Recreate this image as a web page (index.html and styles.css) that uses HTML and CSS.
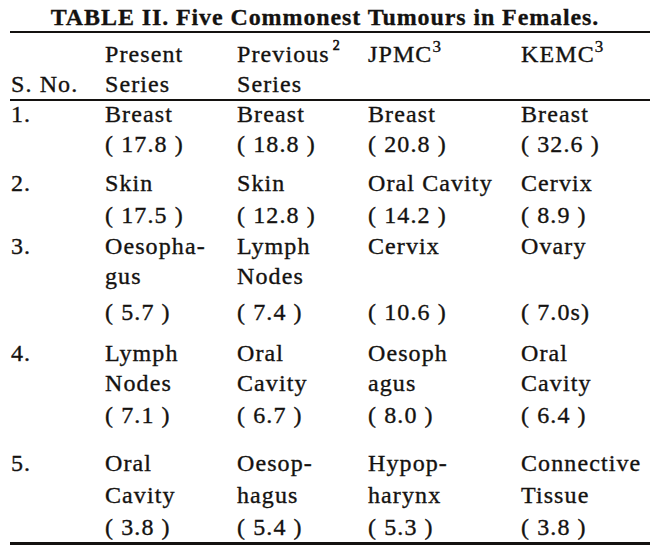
FILE: index.html
```html
<!DOCTYPE html>
<html>
<head>
<meta charset="utf-8">
<link rel="stylesheet" href="styles.css">
</head>
<body>
<div class="title">TABLE II. Five Commonest Tumours in Females.</div>
<div class="table">
  <div class="head grid">
    <div class="cell"><br>S. No.</div>
    <div class="cell">Present<br>Series</div>
    <div class="cell">Previous<sup class="sm">2</sup><br>Series</div>
    <div class="cell">JPMC<sup>3</sup></div>
    <div class="cell">KEMC<sup>3</sup></div>
  </div>

  <div class="row r1">
    <div class="names grid">
      <div class="cell">1.</div>
      <div class="cell">Breast</div>
      <div class="cell">Breast</div>
      <div class="cell">Breast</div>
      <div class="cell">Breast</div>
    </div>
    <div class="vals grid">
      <div class="cell"></div>
      <div class="cell">( 17.8 )</div>
      <div class="cell">( 18.8 )</div>
      <div class="cell">( 20.8 )</div>
      <div class="cell">( 32.6 )</div>
    </div>
  </div>

  <div class="row r2">
    <div class="names grid">
      <div class="cell">2.</div>
      <div class="cell">Skin</div>
      <div class="cell">Skin</div>
      <div class="cell">Oral Cavity</div>
      <div class="cell">Cervix</div>
    </div>
    <div class="vals grid">
      <div class="cell"></div>
      <div class="cell">( 17.5 )</div>
      <div class="cell">( 12.8 )</div>
      <div class="cell">( 14.2 )</div>
      <div class="cell">( 8.9 )</div>
    </div>
  </div>

  <div class="row r3">
    <div class="names grid">
      <div class="cell">3.</div>
      <div class="cell">Oesopha-<br>gus</div>
      <div class="cell">Lymph<br>Nodes</div>
      <div class="cell">Cervix</div>
      <div class="cell">Ovary</div>
    </div>
    <div class="vals grid">
      <div class="cell"></div>
      <div class="cell">( 5.7 )</div>
      <div class="cell">( 7.4 )</div>
      <div class="cell">( 10.6 )</div>
      <div class="cell">( 7.0s)</div>
    </div>
  </div>

  <div class="row r4">
    <div class="names grid">
      <div class="cell">4.</div>
      <div class="cell">Lymph<br>Nodes</div>
      <div class="cell">Oral<br>Cavity</div>
      <div class="cell">Oesoph<br>agus</div>
      <div class="cell">Oral<br>Cavity</div>
    </div>
    <div class="vals grid">
      <div class="cell"></div>
      <div class="cell">( 7.1 )</div>
      <div class="cell">( 6.7 )</div>
      <div class="cell">( 8.0 )</div>
      <div class="cell">( 6.4 )</div>
    </div>
  </div>

  <div class="row r5">
    <div class="names grid">
      <div class="cell">5.</div>
      <div class="cell">Oral<br>Cavity</div>
      <div class="cell">Oesop-<br>hagus</div>
      <div class="cell">Hypop-<br>harynx</div>
      <div class="cell">Connective<br>Tissue</div>
    </div>
    <div class="vals grid">
      <div class="cell"></div>
      <div class="cell">( 3.8 )</div>
      <div class="cell">( 5.4 )</div>
      <div class="cell">( 5.3 )</div>
      <div class="cell">( 3.8 )</div>
    </div>
  </div>
</div>
</body>
</html>
```

FILE: styles.css
```css
html, body {
  margin: 0;
  padding: 0;
  background: #ffffff;
}

body {
  width: 650px;
  height: 554px;
  overflow: hidden;
  color: #141210;
  font-family: "Liberation Serif", "Times New Roman", serif;
}

.title {
  padding-top: 3px;
  height: 28px;
  line-height: 28px;
  font-size: 24px;
  font-weight: bold;
  letter-spacing: 0.9px;
  text-align: center;
  white-space: nowrap;
  -webkit-text-stroke: 0.3px #141210;
}

.table {
  margin-left: 10px;
  border-top: 2px solid #141210;
  border-bottom: 3px solid #141210;
  font-size: 24px;
  letter-spacing: 1.1px;
  line-height: 30px;
  -webkit-text-stroke: 0.35px #141210;
}

.grid {
  display: grid;
  grid-template-columns: 94px 132px 131px 153px 1fr;
  padding-left: 1px;
}

.cell {
  white-space: nowrap;
}

.head {
  padding-top: 6px;
  border-bottom: 2px solid #141210;
}

.head sup {
  font-size: 17px;
  line-height: 0;
  vertical-align: 10px;
  letter-spacing: 0;
}

.head sup.sm {
  font-size: 14px;
  vertical-align: 12px;
  margin-left: 3px;
  -webkit-text-stroke: 0.6px #141210;
}

.r1 .names { margin-top: -2px; }
.r1 .vals { margin-top: 0; }

.r2 .names { margin-top: 9px; }
.r2 .vals { margin-top: 2px; }

.r3 .names { margin-top: 1px; }
.r3 .vals { margin-top: 6px; }

.r4 .names { margin-top: 11px; }
.r4 .vals { margin-top: 2px; }

.r5 .names { margin-top: 17px; line-height: 32px; }
.r5 .vals { margin-top: 1px; }
```
